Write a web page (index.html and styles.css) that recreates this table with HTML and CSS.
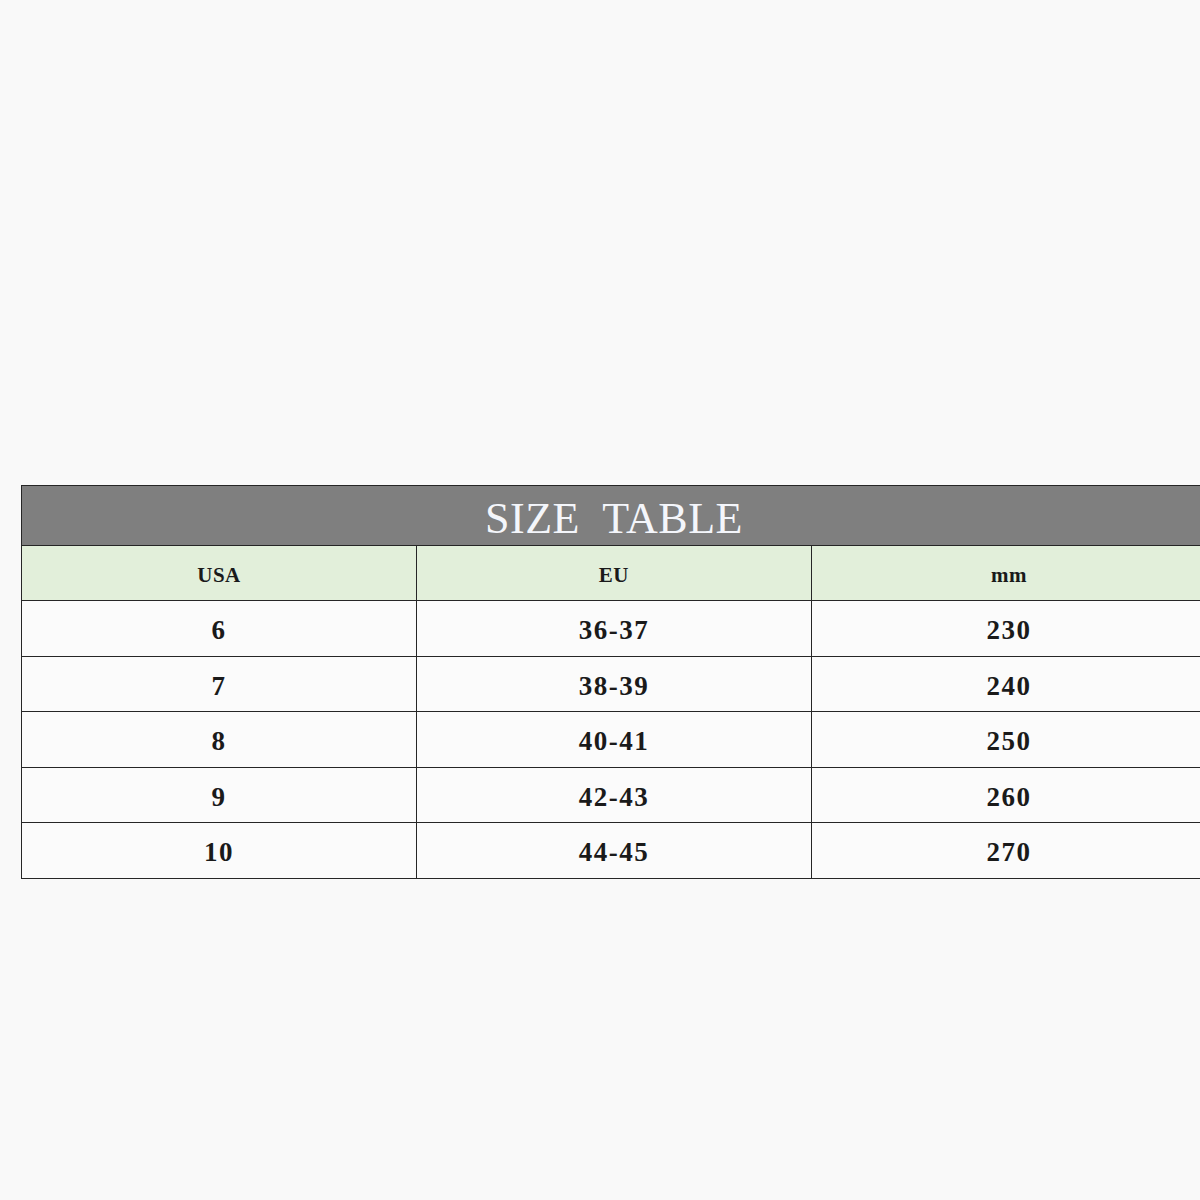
FILE: index.html
```html
<!DOCTYPE html>
<html>
<head>
<meta charset="utf-8">
<link rel="stylesheet" href="styles.css">
</head>
<body>
<div class="page">
  <table class="size-table">
    <tr class="title-row"><td colspan="3">SIZE&nbsp; TABLE</td></tr>
    <tr class="head-row"><td>USA</td><td>EU</td><td>mm</td></tr>
    <tr class="row-a"><td>6</td><td>36-37</td><td>230</td></tr>
    <tr class="row-b"><td>7</td><td>38-39</td><td>240</td></tr>
    <tr class="row-a"><td>8</td><td>40-41</td><td>250</td></tr>
    <tr class="row-b"><td>9</td><td>42-43</td><td>260</td></tr>
    <tr class="row-a"><td>10</td><td>44-45</td><td>270</td></tr>
  </table>
</div>
</body>
</html>
```
FILE: styles.css
```css
html, body {
  margin: 0;
  padding: 0;
  overflow: hidden;
  background: #f9f9f9;
}
.page {
  width: 1300px;
  padding: 485px 0 0 21px;
}
.size-table {
  border-collapse: collapse;
  table-layout: fixed;
  width: 1186px;
  font-family: "Liberation Serif", "Times New Roman", serif;
  color: #1a1a1a;
}
.size-table td {
  border: 1px solid #262626;
  text-align: center;
  padding: 4px 0 0 0;
  width: 395px;
  background: #fbfbfb;
  font-weight: bold;
  font-size: 27px;
  letter-spacing: 1.5px;
  height: 56px;
  box-sizing: border-box;
}
.title-row td {
  background: #7f7f7f;
  color: #f4f6fb;
  font-weight: normal;
  font-size: 44px;
  letter-spacing: 0.5px;
  height: 60px;
  padding-top: 6px;
}
.head-row td {
  background: #e2efda;
  font-size: 21px;
  letter-spacing: 0.5px;
  height: 55px;
  padding-top: 5px;
}
.row-b td {
  height: 55px;
}
```
